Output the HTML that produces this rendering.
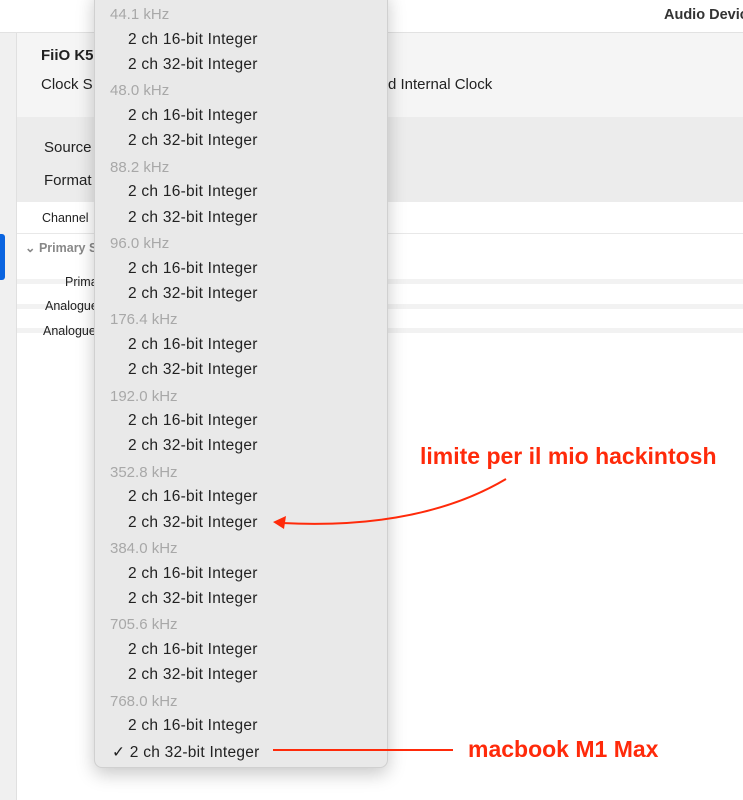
<!DOCTYPE html>
<html><head><meta charset="utf-8"><style>
*{margin:0;padding:0;box-sizing:border-box}
body{width:743px;height:800px;overflow:hidden;background:#fff;font-family:"Liberation Sans",sans-serif;position:relative;color:#222}
.a{position:absolute;white-space:nowrap}
.menu{position:absolute;left:94px;top:-10px;width:294px;height:778px;background:#e9e9e9;border:1px solid #d0d0d0;border-radius:8px;box-shadow:0 6px 18px rgba(0,0,0,.22)}
.menu div{position:absolute;white-space:nowrap}
.h{left:15px;color:#a8a8a8;font-size:15px}
.i{left:33px;color:#222;font-size:15.5px;letter-spacing:0.25px}
</style></head><body>
<div class="a" style="left:0;top:32px;width:743px;height:1px;background:#e2e2e2"></div>
<div class="a" style="left:0;top:33px;width:17px;height:767px;background:#f0f0f0;border-right:1px solid #e0e0e0"></div>
<div class="a" style="left:0;top:234px;width:5px;height:46px;background:#0a64e0;border-radius:0 3px 3px 0"></div>
<div class="a" style="left:17px;top:33px;width:726px;height:84px;background:#f5f5f5"></div>
<div class="a" style="left:17px;top:117px;width:726px;height:85px;background:#ececec"></div>
<div class="a" style="left:17px;top:202px;width:726px;height:32px;background:#fff;border-bottom:1px solid #e8e8e8"></div>
<div class="a" style="left:17px;top:279px;width:726px;height:5px;background:#f2f2f2"></div>
<div class="a" style="left:17px;top:304px;width:726px;height:5px;background:#f2f2f2"></div>
<div class="a" style="left:17px;top:328px;width:726px;height:5px;background:#f2f2f2"></div>
<div class="a" style="left:664px;top:7px;font-size:14.5px;font-weight:bold;color:#333">Audio Devices</div>
<div class="a" style="left:41px;top:47px;font-size:15px;font-weight:bold">FiiO K5</div>
<div class="a" style="left:41px;top:76px;font-size:15px">Clock S</div>
<div class="a" style="left:388px;top:76px;font-size:15px">d Internal Clock</div>
<div class="a" style="left:44px;top:139px;font-size:15px">Source</div>
<div class="a" style="left:44px;top:172px;font-size:15px">Format</div>
<div class="a" style="left:42px;top:211px;font-size:12.5px">Channel</div>
<div class="a" style="left:25px;top:240px;font-size:12.5px;color:#888;font-weight:bold">⌄ Primary S</div>
<div class="a" style="left:65px;top:275px;font-size:12.5px">Prima</div>
<div class="a" style="left:45px;top:299px;font-size:12.5px">Analogue</div>
<div class="a" style="left:43px;top:324px;font-size:12.5px">Analogue</div>
<div class="menu">
<div class="h" style="top:15px">44.1 kHz</div>
<div class="i" style="top:40px">2 ch 16-bit Integer</div>
<div class="i" style="top:65px">2 ch 32-bit Integer</div>
<div class="h" style="top:91px">48.0 kHz</div>
<div class="i" style="top:116px">2 ch 16-bit Integer</div>
<div class="i" style="top:141px">2 ch 32-bit Integer</div>
<div class="h" style="top:168px">88.2 kHz</div>
<div class="i" style="top:192px">2 ch 16-bit Integer</div>
<div class="i" style="top:218px">2 ch 32-bit Integer</div>
<div class="h" style="top:244px">96.0 kHz</div>
<div class="i" style="top:269px">2 ch 16-bit Integer</div>
<div class="i" style="top:294px">2 ch 32-bit Integer</div>
<div class="h" style="top:320px">176.4 kHz</div>
<div class="i" style="top:345px">2 ch 16-bit Integer</div>
<div class="i" style="top:370px">2 ch 32-bit Integer</div>
<div class="h" style="top:397px">192.0 kHz</div>
<div class="i" style="top:421px">2 ch 16-bit Integer</div>
<div class="i" style="top:446px">2 ch 32-bit Integer</div>
<div class="h" style="top:473px">352.8 kHz</div>
<div class="i" style="top:497px">2 ch 16-bit Integer</div>
<div class="i" style="top:523px">2 ch 32-bit Integer</div>
<div class="h" style="top:549px">384.0 kHz</div>
<div class="i" style="top:574px">2 ch 16-bit Integer</div>
<div class="i" style="top:599px">2 ch 32-bit Integer</div>
<div class="h" style="top:625px">705.6 kHz</div>
<div class="i" style="top:650px">2 ch 16-bit Integer</div>
<div class="i" style="top:675px">2 ch 32-bit Integer</div>
<div class="h" style="top:702px">768.0 kHz</div>
<div class="i" style="top:726px">2 ch 16-bit Integer</div>
<div class="i" style="top:752px;left:17px">✓ 2 ch 32-bit Integer</div>
</div>
<div class="a" style="left:420px;top:443px;font-size:23px;font-weight:bold;color:#ff2a0a">limite per il mio hackintosh</div>
<div class="a" style="left:468px;top:736px;font-size:23px;font-weight:bold;color:#ff2a0a">macbook M1 Max</div>
<svg class="a" style="left:0;top:0" width="743" height="800">
<path d="M506 479 Q420 530 282 523" fill="none" stroke="#ff2a0a" stroke-width="2"/>
<path d="M273 522 L286 516 L284 529 Z" fill="#ff2a0a"/>
<line x1="273" y1="750" x2="453" y2="750" stroke="#ff2a0a" stroke-width="2"/>
</svg>
</body></html>
